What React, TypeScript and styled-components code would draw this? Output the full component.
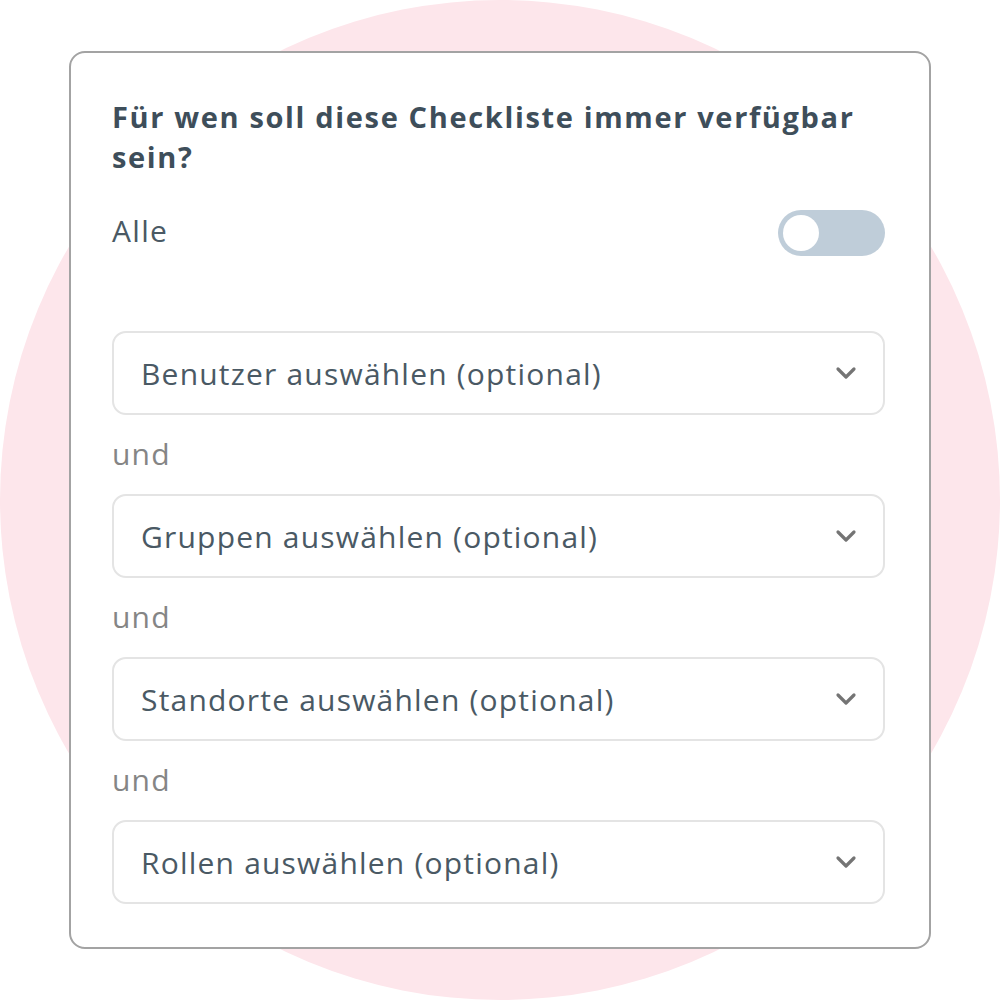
import React from "react";
import styled, { createGlobalStyle } from "styled-components";

const Global = createGlobalStyle`
  html, body { margin: 0; padding: 0; background: #ffffff; }
  body { font-family: "Open Sans", "Lato", sans-serif; }
  * { box-sizing: border-box; }
`;

const Stage = styled.div`
  position: relative;
  width: 1000px;
  height: 1000px;
  overflow: hidden;
  display: flex;
  align-items: flex-start;
  justify-content: center;
  padding-top: 51px;
`;

const Blob = styled.div`
  position: absolute;
  left: 0;
  top: 0;
  width: 1000px;
  height: 1000px;
  border-radius: 50%;
  background: #fde6eb;
`;

const Card = styled.div`
  position: relative;
  width: 862px;
  height: 898px;
  background: #ffffff;
  border: 2px solid #a3a3a3;
  border-radius: 16px;
  padding: 44px 44px 0 41px;
  display: flex;
  flex-direction: column;
`;

const Title = styled.h2`
  margin: 0;
  font-size: 29px;
  line-height: 40px;
  font-weight: 700;
  color: #3e4e5a;
  letter-spacing: 1.65px;
`;

const ToggleRow = styled.div`
  display: flex;
  align-items: center;
  justify-content: space-between;
  margin-top: 33px;
  height: 46px;
`;

const Label = styled.span`
  font-size: 30px;
  letter-spacing: 1.3px;
  color: #4a5964;
  margin-top: -6px;
`;

const Track = styled.div`
  width: 107px;
  height: 46px;
  border-radius: 23px;
  background: #bfcdd9;
  padding: 5px;
  display: flex;
  align-items: center;
`;

const Knob = styled.div`
  width: 36px;
  height: 36px;
  border-radius: 50%;
  background: #ffffff;
`;

const Fields = styled.div`
  display: flex;
  flex-direction: column;
  margin-top: 75px;
`;

const Select = styled.div`
  height: 84px;
  border: 2px solid #e4e4e4;
  border-radius: 14px;
  display: flex;
  align-items: center;
  justify-content: space-between;
  padding: 0 26px 0 27px;
  font-size: 30px;
  letter-spacing: 1.2px;
  color: #4a5964;
`;

const Joiner = styled.div`
  height: 79px;
  display: flex;
  align-items: center;
  font-size: 30px;
  letter-spacing: 1.2px;
  color: #858585;
  padding-bottom: 2px;
`;

const Chevron = () => (
  <svg width="22" height="14" viewBox="0 0 22 14" fill="none">
    <path d="M3 3l8 8 8-8" stroke="#747474" strokeWidth="3.2" strokeLinecap="round" strokeLinejoin="round" />
  </svg>
);

const items = [
  "Benutzer auswählen (optional)",
  "Gruppen auswählen (optional)",
  "Standorte auswählen (optional)",
  "Rollen auswählen (optional)",
];

export default function App() {
  return (
    <>
      <Global />
      <Stage>
        <Blob />
        <Card>
          <Title>Für wen soll diese Checkliste immer verfügbar sein?</Title>
          <ToggleRow>
            <Label>Alle</Label>
            <Track>
              <Knob />
            </Track>
          </ToggleRow>
          <Fields>
            {items.map((t, i) => (
              <React.Fragment key={t}>
                {i > 0 && <Joiner>und</Joiner>}
                <Select>
                  <span>{t}</span>
                  <Chevron />
                </Select>
              </React.Fragment>
            ))}
          </Fields>
        </Card>
      </Stage>
    </>
  );
}
